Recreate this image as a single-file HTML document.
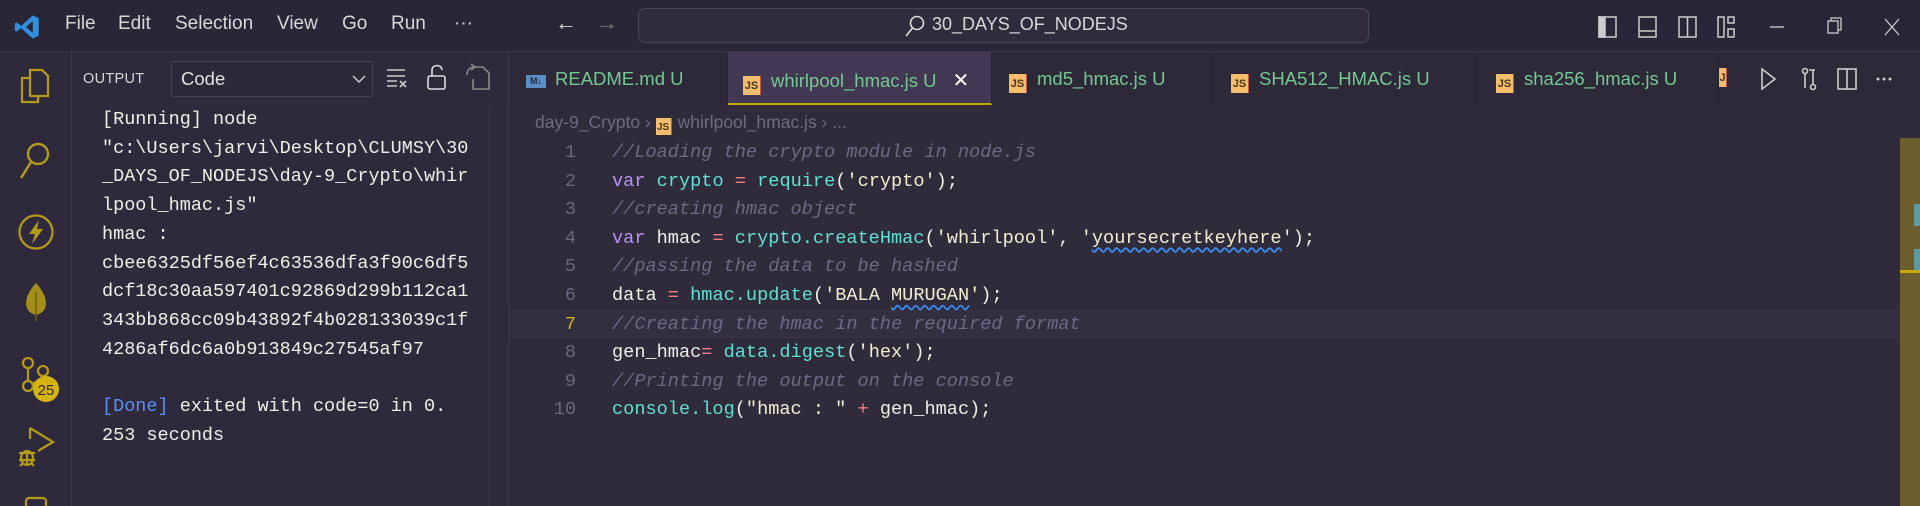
<!DOCTYPE html>
<html><head><meta charset="utf-8"><style>
*{margin:0;padding:0;box-sizing:border-box}
body{width:1920px;height:506px;overflow:hidden;background:#2f2b3b;font-family:"Liberation Sans",sans-serif;position:relative;color:#ccc}
.abs{position:absolute}
#title{left:0;top:0;width:1920px;height:52px;background:#292637;border-bottom:1px solid #3a3648}
.menu{top:13px;font-size:19px;color:#d8d8d8}
#act{left:0;top:52px;width:72px;height:454px;background:#2e2a3c;border-right:1px solid #3d394b;overflow:hidden}
#side{left:72px;top:52px;width:437px;height:454px;background:#2e2a3c;border-right:1px solid #3d394b}
.mono{font-family:"Liberation Mono",monospace}
.out{left:102px;font-size:18.5px;color:#f0efe6;white-space:pre;line-height:28.7px}
#tabs{left:509px;top:52px;width:1411px;height:53px;background:#2d2939}
.tab{top:0;height:53px;border-right:1px solid #262331;font-size:18.5px;color:#73c991;padding-top:16px}
.js{display:inline-block;width:18px;height:19px;background:#f4bd6b;color:#4a3520;font-size:11px;font-weight:bold;text-align:center;line-height:21px;vertical-align:-2px;margin-right:10px;border-right:1px solid #c2584c}
.code{left:612px;font-size:18.6px;white-space:pre;line-height:28.6px;color:#f0efe6}
.ln{left:540px;width:36px;text-align:right;font-size:18.6px;line-height:28.6px;color:#6b6780;white-space:pre}
.c{color:#6e6885;font-style:italic}.k{color:#b990f5}.v{color:#5fe0d4}.o{color:#f47e86}.f{color:#5fe0d4}.s{color:#f2eed0}
.sq{text-decoration:underline wavy #3a8cf0;text-underline-offset:4px}
</style></head><body>
<div id="title" class="abs">
<svg class="abs" style="left:13px;top:13px" width="28" height="28" viewBox="0 0 24 24"><path d="M17 2 L22 4.5 V19.5 L17 22 L7 13 L3 16 L1.5 15 V9 L3 8 L7 11 Z M17 7 L11 12 L17 17 Z" fill="#2f8fe0"/></svg>
<span class="abs menu" style="left:65px">File</span>
<span class="abs menu" style="left:118px">Edit</span>
<span class="abs menu" style="left:175px">Selection</span>
<span class="abs menu" style="left:277px">View</span>
<span class="abs menu" style="left:342px">Go</span>
<span class="abs menu" style="left:391px">Run</span>
<span class="abs menu" style="left:454px">···</span>
<span class="abs menu" style="left:555px;font-size:22px;top:10px">←</span>
<span class="abs menu" style="left:596px;font-size:22px;top:10px;color:#777">→</span>
<div class="abs" style="left:638px;top:8px;width:731px;height:35px;border:1px solid #4a4658;border-radius:7px;background:#302c3e"></div>
<svg class="abs" style="left:904px;top:14px" width="22" height="24" viewBox="0 0 22 24"><circle cx="13" cy="9" r="6.5" fill="none" stroke="#ddd" stroke-width="1.6"/><path d="M8.5 14 L2 22" stroke="#ddd" stroke-width="1.6"/></svg>
<span class="abs menu" style="left:932px;font-size:18px;top:14px">30_DAYS_OF_NODEJS</span>
<svg class="abs" style="left:1598px;top:15px" width="140" height="24" viewBox="0 0 140 24"><g fill="none" stroke="#ccc" stroke-width="1.5"><rect x="1" y="2" width="17" height="20"/><rect x="1" y="2" width="6" height="20" fill="#ccc"/><rect x="41" y="2" width="17" height="20"/><path d="M41 16 H58"/><rect x="81" y="2" width="17" height="20"/><path d="M89.5 2 V22"/><rect x="120" y="2" width="6" height="20"/><rect x="130" y="2" width="6" height="6"/><rect x="130" y="14" width="6" height="8"/></g></svg>
<svg class="abs" style="left:1768px;top:15px" width="140" height="24" viewBox="0 0 140 24"><g fill="none" stroke="#ccc" stroke-width="1.3"><path d="M2 12 H16"/><rect x="60" y="6" width="10" height="12"/><path d="M63 6 V3 H73 V15 H70"/><path d="M117 4 L131 20 M131 4 L117 20"/></g></svg>
</div>
<div id="act" class="abs">
<svg class="abs" style="left:18px;top:16px" width="34" height="36" viewBox="0 0 34 36"><g fill="none" stroke="#b49b17" stroke-width="2.2"><path d="M12 10 H4 V34 H20 V28"/><path d="M12 2 H24 L30 8 V28 H12 Z"/></g></svg>
<svg class="abs" style="left:18px;top:88px" width="34" height="40" viewBox="0 0 34 40"><g fill="none" stroke="#b49b17" stroke-width="2.4"><circle cx="20" cy="14" r="10"/><path d="M13 22 L3 38"/></g></svg>
<svg class="abs" style="left:17px;top:161px" width="38" height="38" viewBox="0 0 38 38"><circle cx="19" cy="19" r="16.5" fill="none" stroke="#b49b17" stroke-width="2.2"/><path d="M22 7 L12 21 H18 L15 31 L26 16 H20 Z" fill="#b49b17"/></svg>
<svg class="abs" style="left:24px;top:230px" width="24" height="40" viewBox="0 0 24 40"><path d="M12 1 C2 12 0 22 4 28 C6 31 9 32 12 33 C15 32 18 31 20 28 C24 22 22 12 12 1Z" fill="#a58e17"/><path d="M12 10 V39" stroke="#6a5c10" stroke-width="1.5"/></svg>
<svg class="abs" style="left:12px;top:304px" width="52" height="50" viewBox="0 0 52 50"><g fill="none" stroke="#b49b17" stroke-width="2.2"><circle cx="16" cy="7" r="5"/><circle cx="31" cy="15" r="5"/><circle cx="16" cy="30" r="5"/><path d="M16 12 V25 M31 20 C31 26 22 26 19 28"/></g><circle cx="34" cy="33" r="13" fill="#d5b410"/><text x="34" y="39" font-size="15" text-anchor="middle" fill="#2e2a3c" font-family="Liberation Sans">25</text></svg>
<svg class="abs" style="left:16px;top:373px" width="40" height="44" viewBox="0 0 40 44"><g fill="none" stroke="#b49b17" stroke-width="2.2"><path d="M14 3 L37 17 L22 26"/><path d="M14 3 V14"/><ellipse cx="11" cy="33" rx="6" ry="7"/><path d="M3 28 H19 M3 35 H19 M4 41 L7 38 M18 41 L15 38 M11 26 V40"/></g></svg>
<svg class="abs" style="left:24px;top:444px" width="24" height="12" viewBox="0 0 24 12"><rect x="2" y="2" width="20" height="12" rx="3" fill="none" stroke="#b49b17" stroke-width="2.2"/></svg>
</div>
<div id="side" class="abs">
<span class="abs" style="left:11px;top:19px;font-size:14.5px;color:#d8d8d8;letter-spacing:0.3px">OUTPUT</span>
<div class="abs" style="left:99px;top:9px;width:202px;height:36px;border:1px solid #45414f;border-radius:3px;background:#2c2838"></div>
<span class="abs" style="left:109px;top:16px;font-size:18.5px;color:#e0e0e0">Code</span>
<svg class="abs" style="left:280px;top:22px" width="14" height="10" viewBox="0 0 14 10"><path d="M1 2 L7 8 L13 2" fill="none" stroke="#ccc" stroke-width="1.5"/></svg>
<svg class="abs" style="left:313px;top:15px" width="24" height="22" viewBox="0 0 24 22"><g stroke="#ccc" stroke-width="1.6" fill="none"><path d="M2 3 H20 M2 9 H20 M2 14 H12 M2 19 H12 M15 14 L21 20 M21 14 L15 20"/></g></svg>
<svg class="abs" style="left:354px;top:11px" width="22" height="28" viewBox="0 0 22 28"><g stroke="#ddd" stroke-width="1.6" fill="none"><rect x="2" y="13" width="17" height="13" rx="2"/><path d="M6 13 V7 C6 1 16 1 16 7"/></g></svg>
<svg class="abs" style="left:393px;top:11px" width="26" height="28" viewBox="0 0 26 28"><g stroke="#888" stroke-width="1.6" fill="none"><path d="M8 4 H18 L24 10 V26 H8 V16"/><path d="M2 12 C2 6 6 4 10 4 M6 1 L10 4 L6 7"/></g></svg>
<div class="abs" style="left:417px;top:53px;width:1px;height:401px;background:#3c3849"></div>
</div>
<div class="abs out mono" style="top:106px">[Running] node
"c:\Users\jarvi\Desktop\CLUMSY\30
_DAYS_OF_NODEJS\day-9_Crypto\whir
lpool_hmac.js"
hmac :
cbee6325df56ef4c63536dfa3f90c6df5
dcf18c30aa597401c92869d299b112ca1
343bb868cc09b43892f4b028133039c1f
4286af6dc6a0b913849c27545af97

<span style="color:#5b8ff0">[Done]</span> exited with code=0 in 0.
253 seconds</div>
<div id="tabs" class="abs">
<div class="abs tab" style="left:0;width:219px;padding-left:17px"><span style="display:inline-block;width:20px;height:13px;background:#5a8ec4;color:#1d2a3d;font-size:9px;font-weight:bold;text-align:center;line-height:13px;margin-right:9px;vertical-align:1px">M↓</span>README.md U</div>
<div class="abs tab" style="left:219px;width:264px;padding-left:15px;background:#433853;border-bottom:2px solid #c9a80b"><span class="js">JS</span>whirlpool_hmac.js U<span style="color:#fff;margin-left:16px;font-size:20px">✕</span></div>
<div class="abs tab" style="left:483px;width:222px;padding-left:17px"><span class="js">JS</span>md5_hmac.js U</div>
<div class="abs tab" style="left:705px;width:262px;padding-left:17px"><span class="js">JS</span>SHA512_HMAC.js U</div>
<div class="abs tab" style="left:967px;width:243px;padding-left:20px"><span class="js">JS</span>sha256_hmac.js U</div>
<div class="abs tab" style="left:1210px;width:8px;padding-left:0;border:none"><span class="js" style="width:8px;overflow:hidden">J</span></div>
<svg class="abs" style="left:1250px;top:14px" width="140" height="26" viewBox="0 0 140 26"><g fill="none" stroke="#ccc" stroke-width="1.6"><path d="M3 3 L16 13 L3 23 Z"/><circle cx="46" cy="5" r="2.5"/><circle cx="54" cy="21" r="2.5"/><path d="M46 8 V22 M54 18 V4 M50 4 H56"/><rect x="79" y="3" width="18" height="20"/><path d="M88 3 V23"/></g><g fill="#ccc"><circle cx="119" cy="13" r="1.5"/><circle cx="125" cy="13" r="1.5"/><circle cx="131" cy="13" r="1.5"/></g></svg>
</div>
<div class="abs" style="left:535px;top:112px;font-size:17.5px;color:#6e6a80;white-space:nowrap">day-9_Crypto &rsaquo; <span class="js" style="width:16px;height:17px;margin-right:6px;font-size:10px;line-height:19px">JS</span>whirlpool_hmac.js &rsaquo; ...</div>
<div class="abs" style="left:509px;top:310px;width:1391px;height:28px;background:#332f40;border-top:1px solid #383446;border-bottom:1px solid #383446"></div>
<div class="abs ln mono" style="top:139px">1
2
3
4
5
6
<span style="color:#d5b410">7</span>
8
9
10</div>
<div class="abs code mono" style="top:139px"><span class="c">//Loading the crypto module in node.js</span>
<span class="k">var</span> <span class="v">crypto</span> <span class="o">=</span> <span class="f">require</span>(<span class="s">'crypto'</span>);
<span class="c">//creating hmac object</span>
<span class="k">var</span> hmac <span class="o">=</span> <span class="f">crypto.createHmac</span>(<span class="s">'whirlpool'</span>, <span class="s">'<span class="sq">yoursecretkeyhere</span>'</span>);
<span class="c">//passing the data to be hashed</span>
data <span class="o">=</span> <span class="f">hmac.update</span>(<span class="s">'BALA <span class="sq">MURUGAN</span>'</span>);
<span class="c">//Creating the hmac in the required format</span>
gen_hmac<span class="o">=</span> <span class="f">data.digest</span>(<span class="s">'hex'</span>);
<span class="c">//Printing the output on the console</span>
<span class="f">console.log</span>(<span class="s">"hmac : "</span> <span class="o">+</span> gen_hmac);</div>
<div class="abs" style="left:1900px;top:138px;width:20px;height:368px;background:#6b5d2c"></div>
<div class="abs" style="left:1914px;top:204px;width:6px;height:22px;background:#5c9aa0"></div>
<div class="abs" style="left:1914px;top:249px;width:6px;height:21px;background:#5c9aa0"></div>
<div class="abs" style="left:1900px;top:270px;width:20px;height:3px;background:#c9a80b"></div>
</body></html>
